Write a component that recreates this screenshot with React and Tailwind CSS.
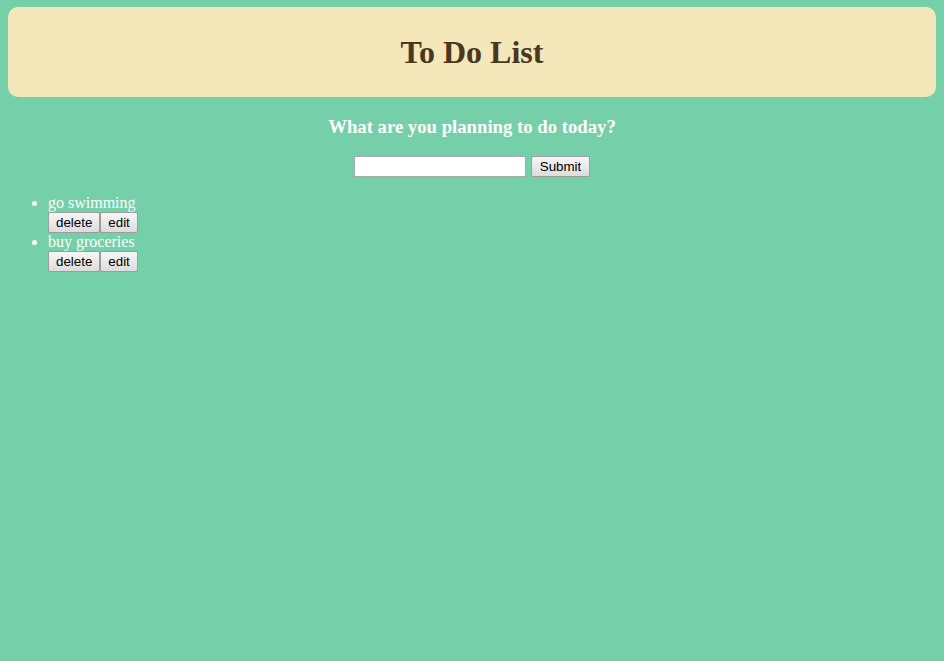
import React, { useState } from "react";

const btn =
  "h-[21px] border border-[#9c9c9c] rounded-[2px] bg-gradient-to-b from-[#f7f7f7] to-[#dcdcdc] px-[7px] text-[13.33px] leading-none text-black font-['Liberation_Sans',Arial,sans-serif]";

export default function App() {
  const [items] = useState(["go swimming", "buy groceries"]);

  return (
    <div className="min-h-screen bg-[#75d0aa] px-[8px] pt-[7px] font-['Liberation_Serif','Times_New_Roman',serif]">
      <div className="h-[90px] rounded-[10px] bg-[#f4e7b9] flex items-center justify-center">
        <h1 className="text-[32px] font-bold text-[#4b3621] leading-none">To Do List</h1>
      </div>

      <h3 className="mt-[19px] text-[18.72px] font-bold text-white text-center leading-[22px]">
        What are you planning to do today?
      </h3>

      <form className="mt-[18px] flex justify-center items-start gap-[5px]" onSubmit={e => e.preventDefault()}>
        <input
          type="text"
          className="w-[172px] h-[21px] bg-white border border-[#a9a9a9] px-[2px] text-[13.33px] outline-none"
        />
        <button type="submit" className={btn + " px-[8px]"}>Submit</button>
      </form>

      <ul className="mt-[17px] pl-[40px] list-disc text-white text-[16px] leading-[18px] marker:text-white">
        {items.map(t => (
          <li key={t}>
            <div>{t}</div>
            <div className="flex">
              <button className={btn}>delete</button>
              <button className={btn}>edit</button>
            </div>
          </li>
        ))}
      </ul>
    </div>
  );
}
